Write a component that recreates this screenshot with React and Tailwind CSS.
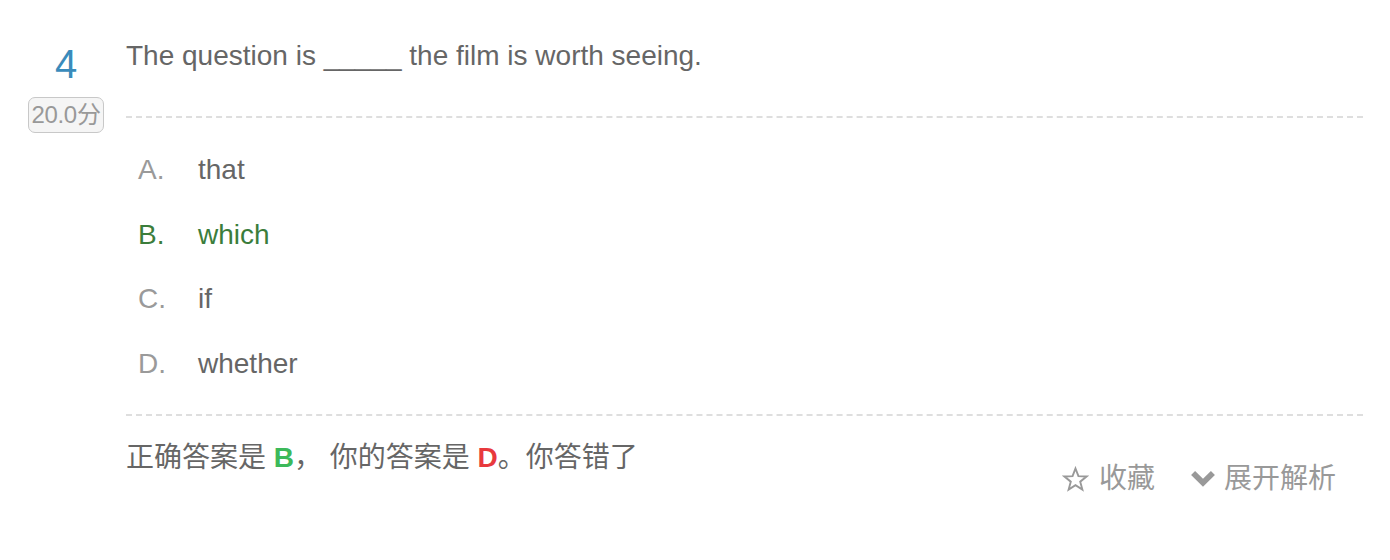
import React from 'react'

const options = [
  { key: 'A', text: 'that' },
  { key: 'B', text: 'which', right: true },
  { key: 'C', text: 'if' },
  { key: 'D', text: 'whether' },
]

const sans = "font-['Liberation_Sans','Noto_Sans_CJK_SC',sans-serif]"

export default function App() {
  return (
    <div className={`w-[1390px] h-[560px] bg-white flex ${sans}`}>
      {/* left: number + score */}
      <div className="w-[126px] flex flex-col items-center pt-[40px] pl-[6px]">
        <div className="text-[40px] leading-[48px] text-[#3a8bbb] font-light">4</div>
        <div className="mt-[9px] px-[2px] h-[36px] flex items-center rounded-[7px] border border-[#c8c8c8] bg-[#f5f5f5] text-[24px] leading-none text-[#999] tracking-[-0.3px]">
          20.0分
        </div>
      </div>

      <div className="flex-1 mr-[27px] flex flex-col">
        <div className="pt-[38px] pb-[42px] text-[28px] leading-[36px] text-[#666] border-b-2 border-dashed border-[#dedede]">
          The question is _____ the film is worth seeing.
        </div>

        <div className="pt-[20px] pb-[18px] border-b-2 border-dashed border-[#dedede]">
          {options.map(o => (
            <div key={o.key} className="h-[64.5px] flex items-center pl-[12px] text-[28px]">
              <span className={`w-[60px] ${o.right ? 'text-[#3b7d3b]' : 'text-[#9a9a9a]'}`}>{o.key}.</span>
              <span className={o.right ? 'text-[#3b7d3b]' : 'text-[#666]'}>{o.text}</span>
            </div>
          ))}
        </div>

        <div className="pt-[22px] text-[28px] leading-[40px] text-[#666]">
          正确答案是 <b className="text-[#3cb95a]">B</b>， 你的答案是 <b className="text-[#e8393d]">D</b>。你答错了
        </div>
        <div className="-mt-[19px] flex justify-end items-center gap-[35px] pr-[27px] text-[28px] leading-[40px] text-[#999]">
          <div className="flex items-center gap-[10px]">
            <svg width="27" height="27" viewBox="0 0 24 24" fill="none" stroke="#999" strokeWidth="1.7" strokeLinejoin="miter">
              <path d="M12 2.2l2.6 6.8 7.2.3-5.6 4.6 1.9 7L12 17l-6.1 3.9 1.9-7-5.6-4.6 7.2-.3z" />
            </svg>
            <span>收藏</span>
          </div>
          <div className="flex items-center gap-[8px]">
            <svg width="26" height="26" viewBox="0 0 24 24" fill="#999">
              <path d="M1 8.2l3.7-3.7L12 11.8l7.3-7.3L23 8.2 12 19.2z" />
            </svg>
            <span>展开解析</span>
          </div>
        </div>
      </div>
    </div>
  )
}
